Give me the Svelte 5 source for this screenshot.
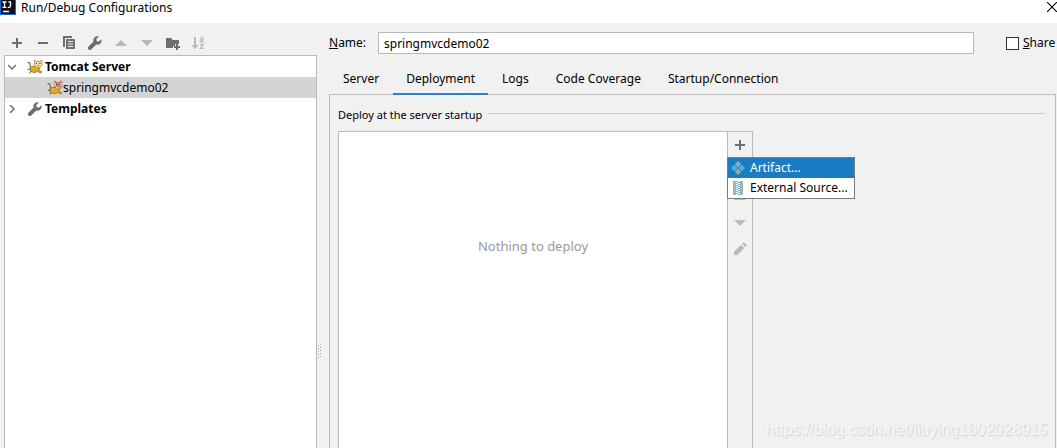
<script lang="ts">
	let name = 'springmvcdemo02';
	let shared = false;
	let activeTab = 'Deployment';

	const tabs = ['Server', 'Deployment', 'Logs', 'Code Coverage', 'Startup/Connection'];
</script>

{#snippet wrench()}
	<svg width="16" height="16" viewBox="0 0 16 16">
		<path
			fill="#6e6e6e"
			d="M14.4 4.2 12 6.6 9.7 6.2 9.4 4 11.8 1.5A4.2 4.2 0 0 0 6.4 6.7L1.5 11.6a1.9 1.9 0 0 0 2.8 2.8L9.2 9.5a4.2 4.2 0 0 0 5.2-5.3z"
		/>
	</svg>
{/snippet}

{#snippet tomcat(broken: boolean)}
	<svg width="16" height="16" viewBox="0 0 16 16">
		<path
			fill="none"
			stroke="#77705f"
			stroke-width="1.2"
			d="M3.5 8.5C2.5 7 4 5.5 2.8 4 2 3.2 1 3.6.6 4.2M4 10 .8 10.4M4.500 12 2.500 14.500"
		/>
		<path
			fill="#e8ad1c"
			stroke="#5c4d2a"
			stroke-width=".6"
			d="M3.500 8 7.500 7 12.500 8.500 12 11 14.500 12.500 14 14 10.500 12.500 7 13.800 3 11.800z"
		/>
		<path
			fill="#f6df9c"
			stroke="#a08d55"
			stroke-width=".8"
			d="M7.500 1 9.400 2.500h3.400L14.600 1l.5 5-2 2.800H9.400L7.200 6z"
		/>
		<path fill="#333" d="M9 4h1v1H9zM12.400 4h1v1h-1zM10.600 6.400h1.400v.8h-1.400z" />
		{#if broken}
			<path stroke="#e86060" stroke-width="1.5" d="m7.500 1 7 7m0-7-7 7" />
		{/if}
	</svg>
{/snippet}

<div class="dialog">
	<header class="titlebar">
		<svg class="logo" width="16" height="16" viewBox="0 0 16 16">
			<path fill="#1769d2" d="M0 0h16v15H0z" />
			<path fill="#101018" d="M1 0h14v14H1z" />
			<path
				fill="none"
				stroke="#fff"
				stroke-width="1.3"
				d="M2.5 2h4M4.5 2v5M2.5 7.3h4M8.5 2h2v4q0 1.4-1.5 1.4H7.8M3 11.5h6"
			/>
		</svg>
		<h1>Run/Debug Configurations</h1>
		<button class="close" aria-label="Close">
			<svg width="10" height="10" viewBox="0 0 10 10">
				<path stroke="#000" stroke-width="1.1" d="m0 0 10 10M10 0 0 10" />
			</svg>
		</button>
	</header>

	<div class="body">
		<aside>
			<div class="toolbar">
				<button aria-label="Add">
					<svg width="16" height="16" viewBox="0 0 16 16">
						<path fill="#6e6e6e" d="M7 3h2v4h4v2H9v4H7V9H3V7h4z" />
					</svg>
				</button>
				<button aria-label="Remove">
					<svg width="16" height="16" viewBox="0 0 16 16">
						<path fill="#6e6e6e" d="M3 7h10v2H3z" />
					</svg>
				</button>
				<button aria-label="Copy">
					<svg width="16" height="16" viewBox="0 0 16 16">
						<path fill="#6e6e6e" d="M2 1h9v2H4v9H2z" />
						<path
							fill="#6e6e6e"
							fill-rule="evenodd"
							d="M5 4h9v10H5zM7 6v1h5V6zM7 8.5v1h5v-1zM7 11v1h5v-1z"
						/>
					</svg>
				</button>
				<button aria-label="Edit templates">{@render wrench()}</button>
				<button aria-label="Move up" disabled>
					<svg width="16" height="16" viewBox="0 0 16 16">
						<path fill="#b9b9b9" d="m8 5 6 6H2z" />
					</svg>
				</button>
				<button aria-label="Move down" disabled>
					<svg width="16" height="16" viewBox="0 0 16 16">
						<path fill="#b9b9b9" d="m8 11 6-6H2z" />
					</svg>
				</button>
				<button aria-label="New folder">
					<svg width="16" height="16" viewBox="0 0 16 16">
						<path fill="#6e6e6e" d="M1 3h5l2 2h6v4h-4v2H8v2H1z" />
						<path fill="#6e6e6e" d="M11 9h2v2h2v2h-2v2h-2v-2H9v-2h2z" />
					</svg>
				</button>
				<button aria-label="Sort alphabetically" disabled>
					<svg width="16" height="16" viewBox="0 0 16 16">
						<path fill="#b9b9b9" d="M3 2h2v8h2.5L4 14 .5 10H3z" />
						<path
							fill="none"
							stroke="#b9b9b9"
							stroke-width="1.3"
							d="M9.2 2.8q2.800-1 2.800.6v3.800M12 4.600H10.300q-1.300.2-1.200 1.300 .3 1 1.700.8L12 6M9 9.400h3.200L9.300 13.300h3.300"
						/>
					</svg>
				</button>
			</div>

			<ul class="tree">
				<li class="group">
					<svg class="arrow" width="8" height="8" viewBox="0 0 8 8">
						<path fill="none" stroke="#6e6e6e" stroke-width="1.5" d="m0 2 4 4 4-4" />
					</svg>
					{@render tomcat(false)}
					<span>Tomcat Server</span>
				</li>
				<li class="leaf">
					{@render tomcat(true)}
					<span>springmvcdemo02</span>
				</li>
				<li class="group">
					<svg class="arrow" width="8" height="8" viewBox="0 0 8 8">
						<path fill="none" stroke="#6e6e6e" stroke-width="1.5" d="m2 0 4 4-4 4" />
					</svg>
					{@render wrench()}
					<span>Templates</span>
				</li>
			</ul>
		</aside>

		<div class="splitter">
			<svg width="6" height="16" viewBox="0 0 6 16">
				<path
					fill="#a8a8a8"
					d="M1 2h1v1H1zM1 5h1v1H1zM1 8h1v1H1zM1 11h1v1H1zM1 14h1v1H1zM3 1h1v1H3zM3 4h1v1H3zM3 7h1v1H3zM3 10h1v1H3zM3 13h1v1H3z"
				/>
			</svg>
		</div>

		<main>
			<div class="name-row">
				<label for="name"><u>N</u>ame:</label>
				<input id="name" type="text" bind:value={name} />
				<label class="share"><input type="checkbox" bind:checked={shared} /><span><u>S</u>hare</span></label>
			</div>

			<nav class="tabs">
				{#each tabs as tab}
					<button class:active={tab === activeTab} on:click={() => (activeTab = tab)}>{tab}</button>
				{/each}
			</nav>

			<section class="panel">
				<h2>Deploy at the server startup</h2>
				<div class="deploy">
					<div class="list">Nothing to deploy</div>
					<div class="actions">
						<button aria-label="Add">
							<svg width="16" height="16" viewBox="0 0 16 16">
								<path fill="#6e6e6e" d="M7 3h2v4h4v2H9v4H7V9H3V7h4z" />
							</svg>
						</button>
						<button aria-label="Remove" disabled>
							<svg width="16" height="16" viewBox="0 0 16 16">
								<path fill="#b9b9b9" d="M3 7h10v2H3z" />
							</svg>
						</button>
						<button aria-label="Up" disabled>
							<svg width="16" height="16" viewBox="0 0 16 16">
								<path fill="#b9b9b9" d="m8 5 6 6H2z" />
							</svg>
						</button>
						<button aria-label="Down" disabled>
							<svg width="16" height="16" viewBox="0 0 16 16">
								<path fill="#b9b9b9" d="m8 11 6-6H2z" />
							</svg>
						</button>
						<button aria-label="Edit" disabled>
							<svg width="16" height="16" viewBox="0 0 16 16">
								<path
									fill="#b9b9b9"
									d="M2 10.800 9 3.800l3.200 3.200L5.200 14H2zM10 2.800l1-1q.8-.7 1.600 0l1.600 1.600q.7.8 0 1.600l-1 1z"
								/>
							</svg>
						</button>

						<div class="menu">
							<button class="selected">
								<svg width="16" height="16" viewBox="0 0 16 16">
									<path fill="#9aa7b0" d="m8 1 3.300 3.300L8 7.600 4.700 4.300zM8 8.400l3.300 3.300L8 15l-3.300-3.300z" />
									<path fill="#40b6e0" d="m4.300 4.700 3.300 3.300-3.300 3.300L1 8zM11.700 4.700 15 8l-3.300 3.300L8.400 8z" />
								</svg>
								Artifact...
							</button>
							<button>
								<svg width="16" height="16" viewBox="0 0 16 16">
									<path fill="#a9b2b9" d="M3 1h3v14H3zM10 1h3v14h-3z" />
									<path
										fill="#62bfe2"
										d="M6 1h2v1H6zM8 2h2v1H8zM6 3h2v1H6zM8 4h2v1H8zM6 5h2v1H6zM8 6h2v1H8zM6 7h2v1H6zM8 8h2v1H8zM6 9h2v1H6zM8 10h2v1H8zM6 11h2v1H6zM8 12h2v1H8zM6 13h2v1H6zM8 14h2v1H8z"
									/>
								</svg>
								External Source...
							</button>
						</div>
					</div>
				</div>
			</section>
		</main>
	</div>

	<div class="watermark">https://blog.csdn.net/liuying1802028915</div>
</div>

<style>
	:global(body) {
		margin: 0;
	}

	.dialog {
		position: relative;
		display: flex;
		flex-direction: column;
		height: 100vh;
		overflow: hidden;
		background: #f1f1f1;
		color: #000;
		font-family: 'Noto Sans', 'Open Sans', sans-serif;
		font-size: 12px;
		line-height: 20px;
	}

	svg {
		display: block;
		flex: none;
	}

	button {
		padding: 0;
		border: none;
		background: none;
		color: inherit;
		font: inherit;
		white-space: nowrap;
	}

	.titlebar {
		display: flex;
		align-items: flex-start;
		height: 23px;
		background: #fff;
	}

	h1 {
		flex: 1;
		margin: 0 0 0 5px;
		font-size: 12px;
		font-weight: 400;
		line-height: 16px;
	}

	.close {
		margin-top: 2px;
	}

	.body {
		display: flex;
		flex: 1;
		min-height: 0;
		padding: 0 1px 0 4px;
	}

	aside {
		display: flex;
		flex-direction: column;
		flex: none;
		width: 313px;
	}

	.toolbar {
		display: flex;
		gap: 10px;
		padding: 12px 5px 4px;
	}

	.tree {
		flex: 1;
		margin: 0;
		padding: 0;
		list-style: none;
		background: #fff;
		border: 1px solid #b9b9b9;
		border-bottom: none;
	}

	.tree li {
		display: flex;
		align-items: center;
		height: 21px;
	}

	.group {
		padding-left: 3px;
		font-weight: 700;
	}

	.group span {
		margin-left: 2px;
	}

	.arrow {
		margin-right: 11px;
	}

	.tree .leaf {
		padding-left: 42px;
		background: #d4d4d4;
	}

	.splitter {
		display: flex;
		flex: none;
		width: 12px;
		padding-top: 320px;
	}

	main {
		display: flex;
		flex-direction: column;
		flex: 1;
		min-width: 0;
	}

	.name-row {
		display: flex;
		align-items: center;
		padding-top: 9px;
	}

	.name-row label {
		width: 49px;
	}

	input[type='text'] {
		flex: 1;
		min-width: 0;
		height: 22px;
		box-sizing: border-box;
		padding: 0 5px;
		border: 1px solid #b9b9b9;
		border-radius: 0;
		background: #fff;
		color: inherit;
		font: inherit;
	}

	.name-row .share {
		display: flex;
		align-items: center;
		gap: 4px;
		width: 50px;
		margin-left: 32px;
	}

	input[type='checkbox'] {
		flex: none;
		width: 13px;
		height: 13px;
		margin: 0;
		appearance: none;
		border: 1px solid #333;
		background: #fff;
	}

	input[type='checkbox']:checked {
		background: #2f7fd1;
	}

	.tabs {
		z-index: 1;
		display: flex;
		gap: 1px;
		height: 31px;
		margin: 10px 0 -1px 1px;
	}

	.tabs button {
		padding: 0 13px;
		border-bottom: 2px solid transparent;
	}

	.tabs .active {
		border-color: #2f7fd1;
	}

	.panel {
		display: flex;
		flex-direction: column;
		flex: 1;
		padding: 10px 10px 0 8px;
		border: 1px solid #b9b9b9;
		border-bottom: none;
	}

	h2 {
		display: flex;
		gap: 6px;
		margin: 0 0 6px;
		font-size: 11px;
		font-weight: 400;
		line-height: 20px;
	}

	h2::after {
		content: '';
		flex: 1;
		height: 1px;
		margin-top: 8px;
		background: #c9c9c9;
	}

	.deploy {
		display: flex;
		flex: 1;
		width: 415px;
		max-width: 100%;
		box-sizing: border-box;
		border: 1px solid #b9b9b9;
		border-bottom: none;
	}

	.list {
		flex: 1;
		padding-top: 104px;
		background: #fff;
		color: #999;
		font-size: 13px;
		text-align: center;
	}

	.actions {
		position: relative;
		display: flex;
		flex-direction: column;
		align-items: center;
		gap: 10px;
		width: 24px;
		padding-top: 5px;
		border-left: 1px solid #b9b9b9;
	}

	.menu {
		position: absolute;
		top: 25px;
		left: -1px;
		width: 126px;
		background: #fff;
		border: 1px solid #7a7a7a;
	}

	.menu button {
		display: flex;
		align-items: center;
		gap: 4px;
		width: 100%;
		height: 20px;
		padding-left: 2px;
	}

	.menu .selected {
		background: #1a7dc4;
		color: #fff;
	}

	.watermark {
		position: absolute;
		right: 9px;
		bottom: 8px;
		color: #f6f6f6;
		font-family: 'Liberation Sans', Arial, sans-serif;
		font-size: 16px;
		text-shadow: 1px 1px 1px #d0d0d0;
		pointer-events: none;
	}
</style>
